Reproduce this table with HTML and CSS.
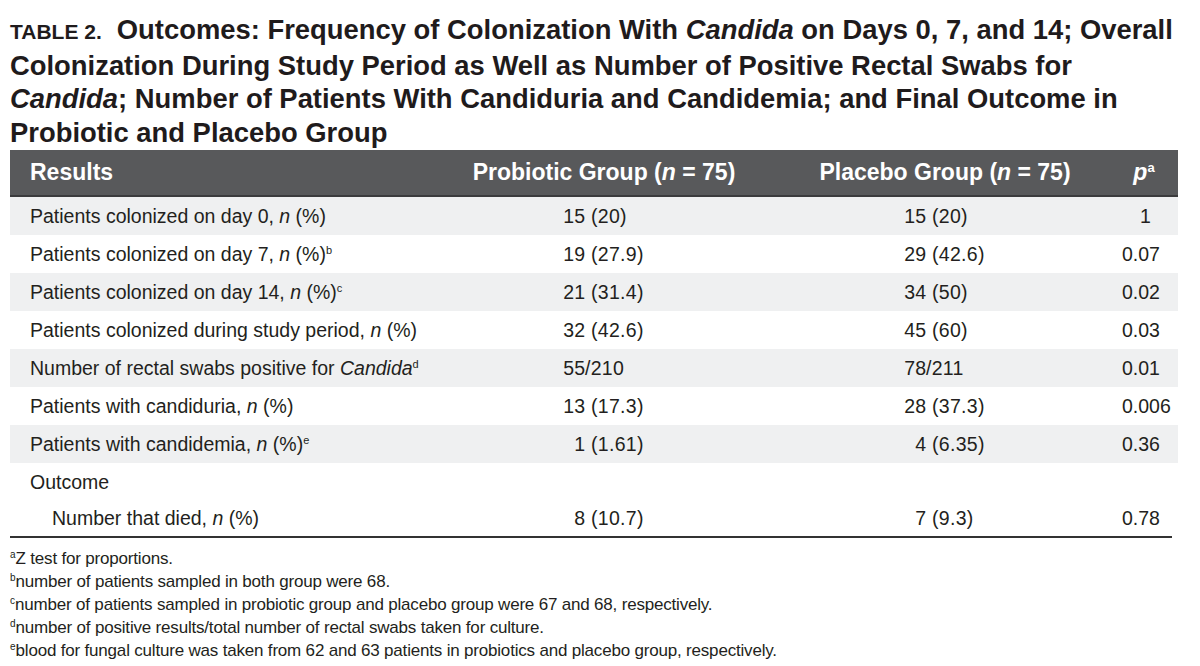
FILE: index.html
```html
<!DOCTYPE html>
<html lang="en">
<head>
<meta charset="utf-8">
<title>Table 2 Outcomes</title>
<link rel="stylesheet" href="styles.css">
</head>
<body>
<div class="page">
  <h1 class="title"><span class="label">TABLE 2.</span>Outcomes: Frequency of Colonization With <i>Candida</i> on Days 0, 7, and 14; Overall<br>Colonization During Study Period as Well as Number of Positive Rectal Swabs for<br><i>Candida</i>; Number of Patients With Candiduria and Candidemia; and Final Outcome in<br>Probiotic and Placebo Group</h1>

  <div class="table">
    <div class="row head">
      <div class="c1">Results</div>
      <div class="c2">Probiotic Group (<i>n</i> = 75)</div>
      <div class="c3">Placebo Group (<i>n</i> = 75)</div>
      <div class="c4"><i>p</i><sup>a</sup></div>
    </div>

    <div class="row alt">
      <div class="c1">Patients colonized on day 0, <i>n</i> (%)</div>
      <div class="c2 num"><span class="n">15</span><span class="r">(20)</span></div>
      <div class="c3 num"><span class="n">15</span><span class="r">(20)</span></div>
      <div class="c4 pv one">1</div>
    </div>
    <div class="row">
      <div class="c1">Patients colonized on day 7, <i>n</i> (%)<sup>b</sup></div>
      <div class="c2 num"><span class="n">19</span><span class="r">(27.9)</span></div>
      <div class="c3 num"><span class="n">29</span><span class="r">(42.6)</span></div>
      <div class="c4 pv">0.07</div>
    </div>
    <div class="row alt">
      <div class="c1">Patients colonized on day 14, <i>n</i> (%)<sup>c</sup></div>
      <div class="c2 num"><span class="n">21</span><span class="r">(31.4)</span></div>
      <div class="c3 num"><span class="n">34</span><span class="r">(50)</span></div>
      <div class="c4 pv">0.02</div>
    </div>
    <div class="row">
      <div class="c1">Patients colonized during study period, <i>n</i> (%)</div>
      <div class="c2 num"><span class="n">32</span><span class="r">(42.6)</span></div>
      <div class="c3 num"><span class="n">45</span><span class="r">(60)</span></div>
      <div class="c4 pv">0.03</div>
    </div>
    <div class="row alt">
      <div class="c1">Number of rectal swabs positive for <i>Candida</i><sup>d</sup></div>
      <div class="c2 num"><span class="n">55</span><span class="r tight">/210</span></div>
      <div class="c3 num"><span class="n">78</span><span class="r tight">/211</span></div>
      <div class="c4 pv">0.01</div>
    </div>
    <div class="row">
      <div class="c1">Patients with candiduria, <i>n</i> (%)</div>
      <div class="c2 num"><span class="n">13</span><span class="r">(17.3)</span></div>
      <div class="c3 num"><span class="n">28</span><span class="r">(37.3)</span></div>
      <div class="c4 pv">0.006</div>
    </div>
    <div class="row alt">
      <div class="c1">Patients with candidemia, <i>n</i> (%)<sup>e</sup></div>
      <div class="c2 num"><span class="n">1</span><span class="r">(1.61)</span></div>
      <div class="c3 num"><span class="n">4</span><span class="r">(6.35)</span></div>
      <div class="c4 pv">0.36</div>
    </div>
    <div class="row">
      <div class="c1">Outcome</div>
      <div class="c2"></div>
      <div class="c3"></div>
      <div class="c4"></div>
    </div>
    <div class="row last">
      <div class="c1 indent">Number that died, <i>n</i> (%)</div>
      <div class="c2 num"><span class="n">8</span><span class="r">(10.7)</span></div>
      <div class="c3 num"><span class="n">7</span><span class="r">(9.3)</span></div>
      <div class="c4 pv">0.78</div>
    </div>
  </div>

  <div class="notes">
    <p><sup>a</sup>Z test for proportions.</p>
    <p><sup>b</sup>number of patients sampled in both group were 68.</p>
    <p><sup>c</sup>number of patients sampled in probiotic group and placebo group were 67 and 68, respectively.</p>
    <p><sup>d</sup>number of positive results/total number of rectal swabs taken for culture.</p>
    <p><sup>e</sup>blood for fungal culture was taken from 62 and 63 patients in probiotics and placebo group, respectively.</p>
  </div>
</div>
</body>
</html>
```

FILE: styles.css
```css
* { box-sizing: border-box; }

html, body {
  margin: 0;
  padding: 0;
  background: #ffffff;
}

body {
  font-family: "Liberation Sans", Arial, Helvetica, sans-serif;
  color: #231f20;
}

.page {
  width: 1200px;
  padding: 13px 22px 0 10px;
}

.title {
  margin: 0;
  font-size: 27.4px;
  line-height: 33.5px;
  font-weight: 700;
  color: #1f1b1c;
  letter-spacing: 0;
  white-space: nowrap;
}

.title .label {
  font-size: 21px;
  margin-right: 15px;
}

.table {
  margin-top: 1px;
  width: 1168px;
}

.row {
  display: grid;
  grid-template-columns: 428px 332px 350px 1fr;
  height: 38px;
  align-items: center;
  font-size: 19.5px;
  color: #231f20;
}

.row.alt {
  background: #eff0f1;
}

.row.head {
  height: 47px;
  background: #58595b;
  border-bottom: 2px solid #3b3b3d;
  color: #ffffff;
  font-weight: 700;
  font-size: 23px;
}

.row.head .c1 { padding-left: 20px; }
.row.head .c2,
.row.head .c3 { text-align: center; }
.row.head .c4 { text-align: center; padding-right: 10px; }

.row.head sup {
  font-size: 13px;
  vertical-align: 8px;
  line-height: 0;
  font-weight: 700;
}

.row.last {
  height: 37px;
  border-bottom: 2px solid #333333;
  margin-right: 6px;
}

.c1 {
  padding-left: 20px;
  white-space: nowrap;
}

.c1.indent { padding-left: 42px; }

.c1 sup {
  font-size: 11px;
  vertical-align: 7px;
  line-height: 0;
}

.num {
  display: grid;
  white-space: nowrap;
}

.c2.num { grid-template-columns: 147px auto; }
.c3.num { grid-template-columns: 156px auto; }

.num .n { text-align: right; }
.num .r { padding-left: 6px; letter-spacing: 0.3px; }
.num .r.tight { padding-left: 0; }

.pv {
  padding-left: 2px;
}

.pv.one { padding-left: 20px; }

.notes {
  margin-top: 9px;
  font-size: 17px;
  line-height: 23px;
  color: #231f20;
}

.notes p {
  margin: 0;
  white-space: nowrap;
  letter-spacing: -0.19px;
}

.notes sup {
  font-size: 10px;
  vertical-align: 6px;
  line-height: 0;
  letter-spacing: 0;
}
```
